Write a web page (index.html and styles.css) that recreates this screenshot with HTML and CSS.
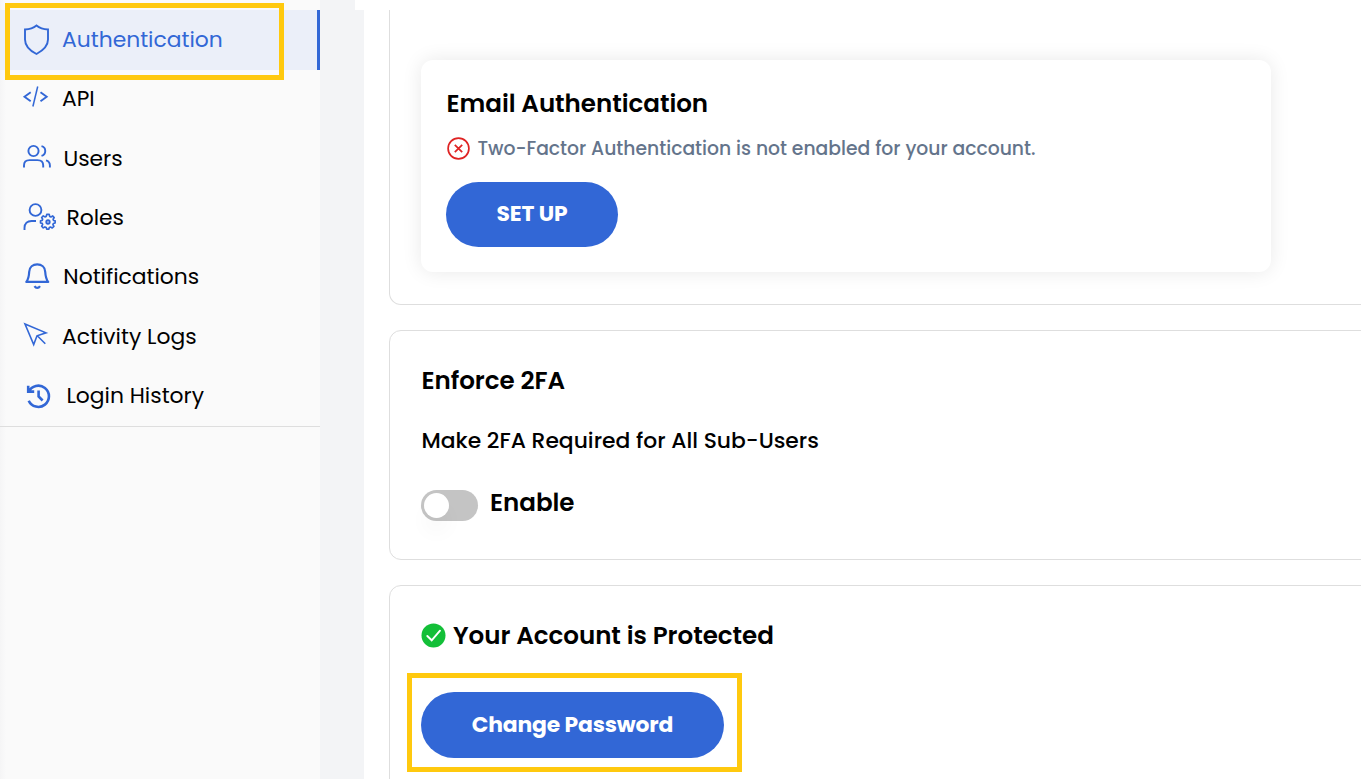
FILE: index.html
```html
<!DOCTYPE html>
<html lang="en">
<head>
<meta charset="utf-8">
<title>Authentication</title>
<link rel="stylesheet" href="styles.css">
</head>
<body>
<div class="app">
  <nav class="sidebar">
    <a class="item active">
      <svg class="icon shield" width="34" height="34" viewBox="0 0 34 34"><path d="M16.500 2.500 C19.500 5 23 6.300 28 6.500 V16.500 C28 23 23 27.500 16.500 31 C9.500 27.500 5 23 5 16.500 V6.500 C10 6.300 13.500 5 16.500 2.500Z"/></svg>
      <span class="label t-auth">Authentication</span>
      <span class="callout callout-nav"></span>
    </a>
    <a class="item">
      <svg class="icon" width="34" height="34" viewBox="0 0 34 34"><path d="M10.700 9.200 L4.500 13.700 L10.700 18.200 M20.500 9.200 L26.700 13.700 L20.500 18.200"/><path class="slash" d="M17.700 3.500 L12.900 23.500"/></svg>
      <span class="label t-api">API</span>
    </a>
    <a class="item">
      <svg class="icon" width="34" height="34" viewBox="0 0 34 34"><circle cx="13.500" cy="9" r="5.100"/><path d="M4 25.500 V23.500 C4 20 6 18.100 9.500 18.100 H17.500 C21 18.100 23.200 20 23.200 23.500 V25.500 M21.500 4.100 C26.500 5.200 26.500 12.500 21.500 13.800 M26 18.400 C28.500 19.100 29.900 21 29.900 23.500 V25.500"/></svg>
      <span class="label t-users">Users</span>
    </a>
    <a class="item">
      <svg class="icon roles" width="38" height="34" viewBox="0 0 38 34"><circle cx="15.500" cy="9" r="5.900"/><path d="M4.500 29 V27 C4.500 22.500 7.500 20 11.500 20 H16"/><path class="gear" transform="translate(28 21) scale(.88) translate(-28 -22)" d="M26.600 13.400 h2.800 l.6 2.300 1.300 .6 2.100-1.200 1.600 1.900-1.200 1.900 .5 1.400 1.800.4v2.500l-2 .5-.5 1.300 1.100 2-1.900 1.800-2-1.100-1.300.5-.5 1.900h-2.500l-.5-1.900-1.500-.6-1.900 1.100-1.800-1.900 1.100-1.900-.5-1.300-1.900-.5v-2.500l1.900-.5.5-1.300-1.100-1.900 1.800-1.800 1.900 1.100 1.500-.6Z"/><circle class="gear" cx="28" cy="21" r="1.700"/></svg>
      <span class="label t-roles">Roles</span>
    </a>
    <a class="item">
      <svg class="icon" width="34" height="34" viewBox="0 0 34 34"><path class="bold" d="M6.300 20.900 H28.200 C26.500 18.700 25.500 15.200 25.200 10.700 C25 6.200 21.500 3.400 17.200 3.400 C12.900 3.400 9.500 6.200 9.200 10.700 C9 15.200 8 18.700 6.300 20.900Z M14.500 25.100 C16 27.500 18.500 27.500 20 25.100"/></svg>
      <span class="label t-notif">Notifications</span>
    </a>
    <a class="item">
      <svg class="icon thin" width="34" height="34" viewBox="0 0 34 34"><path d="M5 4 L26 12.800 L17 15.800 L13.700 24.500Z M17.800 16.200 L25.300 23.800"/></svg>
      <span class="label t-activity">Activity Logs</span>
    </a>
    <a class="item">
      <svg class="icon" width="34" height="34" viewBox="0 0 34 34"><path class="heavy" d="M8.700 12.900 A10.600 10.600 0 1 1 8.700 21.700 M8.200 6.700 V12.600 H14.200 M18.600 11.600 V17.500 L22.600 21.500"/></svg>
      <span class="label t-login">Login History</span>
    </a>
  </nav>
  <div class="gutter"></div>
  <main class="main">
    <section class="panel panel-email">
      <div class="card">
        <h2 class="title t-email">Email Authentication</h2>
        <p class="status">
          <svg class="status-icon" width="24" height="24" viewBox="0 0 24 24"><circle cx="12.500" cy="12.500" r="10.400"/><path d="M8.800 8.800 L16.200 16.200 M16.200 8.800 L8.800 16.200"/></svg>
          <span class="t-status">Two-Factor Authentication is not enabled for your account.</span>
        </p>
        <button class="button setup"><span class="t-setup">SET UP</span></button>
      </div>
    </section>
    <section class="panel panel-enforce">
      <h2 class="title t-enforce">Enforce 2FA</h2>
      <p class="note t-note">Make 2FA Required for All Sub-Users</p>
      <div class="switch-row">
        <span class="switch"><span class="knob"></span></span>
        <span class="title t-enable">Enable</span>
      </div>
    </section>
    <section class="panel panel-password">
      <div class="protected">
        <svg width="25" height="25" viewBox="0 0 25 25"><circle cx="12.500" cy="12.500" r="12" fill="#13bf38"/><path d="M6.300 13 L10.700 17.300 L19 7.700" fill="none" stroke="#fff" stroke-width="1.900" stroke-linecap="round"/></svg>
        <h2 class="title t-protected">Your Account is Protected</h2>
      </div>
      <div class="action">
        <button class="button change"><span class="t-change">Change Password</span></button>
        <span class="callout callout-button"></span>
      </div>
    </section>
  </main>
</div>
</body>
</html>
```
FILE: styles.css
```css
* { box-sizing: border-box; }
body { margin: 0; background: #fff; color: #000; font-family: Poppins, Inter, "Open Sans", sans-serif; }
h2, p { margin: 0; }
.app { display: flex; height: 779px; overflow: hidden; }
.sidebar { width: 320px; flex: none; padding-top: 10px; background: linear-gradient(90deg, #f5f5f6, #fafafa 6px); }
.item { position: relative; display: flex; align-items: center; height: 59.300px; padding-left: 20px; font-size: 21.850px; }
.item:last-child { border-bottom: 1px solid #dedede; height: 60.200px; }
.item.active { height: 60px; background: #ebeff9; border-right: 3px solid #3267d6; color: #3267d6; }
.icon { flex: none; fill: none; stroke: #3267d6; stroke-width: 1.900; }
.slash { stroke-width: 1.500; }
.thin { stroke-width: 1.600; }
.gear { stroke-width: 1.900; stroke-linejoin: round; }
.bold { stroke-width: 2.200; stroke-linejoin: round; }
.heavy { stroke-width: 2.600; }
.label { margin: 0 0 1px 8px; white-space: nowrap; }
.t-users { margin-left: 9.400px; }
.t-notif { margin: 0 0 2px 9.300px; }
.t-api { margin-bottom: 2.500px; }
.t-roles { margin-left: 8.400px; }
.t-login { margin-left: 12.400px; }
.callout { position: absolute; border: 5px solid #ffc90e; pointer-events: none; }
.callout-nav { left: 5px; top: -7px; width: 279px; height: 77px; }
.gutter { width: 44px; flex: none; background: linear-gradient(#fff, #fff) 35px 0 / 9px 10px no-repeat #f3f4f6; }
.main { flex: 1; min-width: 0; padding: 10px 0 0 25px; }
.panel { width: 1100px; border: 1px solid #dedede; border-radius: 12px; padding-left: 31px; margin-bottom: 25px; }
.panel-email { height: 295px; border-top: 0; border-top-left-radius: 0; padding-top: 50px; }
.card { width: 850px; height: 212px; padding: 27px 25px; border-radius: 12px; box-shadow: 0 0 20px rgba(0, 0, 0, .09); }
.title { font-size: 24.580px; line-height: 34px; font-weight: 600; letter-spacing: -.03px; white-space: nowrap; }
.t-email, .t-enforce, .note { padding-left: .5px; }
.status { display: flex; align-items: center; gap: 7.500px; height: 24px; margin: 15px 0 22px; color: #64748b; font-size: 18.760px; font-weight: 500; white-space: nowrap; }
.t-status { padding-top: 1px; }
.status-icon { flex: none; fill: none; stroke: #df2323; stroke-width: 1.700; }
.button { display: block; border: 0; padding: 0 0 2px; border-radius: 33px; background: #3267d6; color: #fff; font: inherit; font-size: 21.850px; font-weight: 700; letter-spacing: -.15px; white-space: nowrap; }
.setup { width: 172px; height: 65px; }
.panel-enforce { height: 230px; padding-top: 33px; }
.note { margin-top: 27px; font-size: 21.850px; line-height: 32px; font-weight: 500; white-space: nowrap; }
.switch-row { display: flex; gap: 12px; margin-top: 29px; }
.switch { width: 57px; height: 31px; margin-top: 4px; padding: 3px; border-radius: 16px; background: #c4c4c4; }
.knob { display: block; width: 25px; height: 25px; border-radius: 50%; background: #fff; box-shadow: 0 15px 20px rgba(0, 0, 0, .03); }
.panel-password { height: 230px; padding-top: 32px; }
.protected { display: flex; align-items: center; gap: 7px; }
.protected .title { padding-top: 1px; }
.action { position: relative; margin-top: 39px; }
.change { width: 303px; height: 66px; }
.callout-button { left: -14px; top: -19px; width: 335px; height: 99px; }
```
